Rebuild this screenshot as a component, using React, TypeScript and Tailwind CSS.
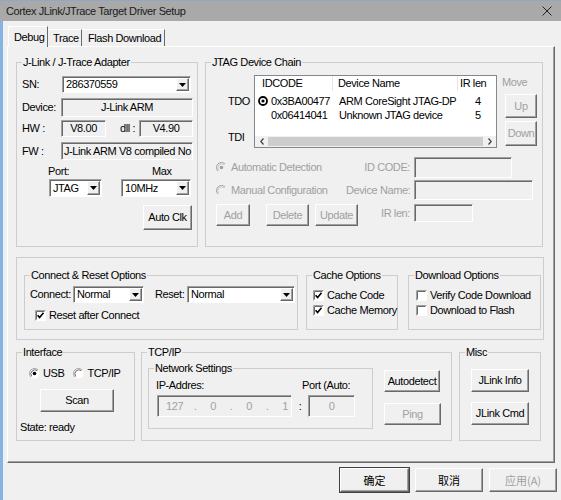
import React from "react";

// raised / sunken 3D edges used by the classic dialog controls
const raised =
  "bg-[#f0f0f0] border border-t-white border-l-white border-r-[#696969] border-b-[#696969] shadow-[inset_-1px_-1px_0_#a0a0a0]";
const sunken =
  "border border-t-[#a0a0a0] border-l-[#a0a0a0] border-r-white border-b-white shadow-[inset_1px_1px_0_#696969]";

const DownArrow = () => (
  <svg width="7" height="4" viewBox="0 0 7 4">
    <path d="M0 0h7L3.5 4z" fill="#000" />
  </svg>
);

function Btn({ className = "", dim, children }: { className?: string; dim?: boolean; children: React.ReactNode }) {
  return (
    <div className={`flex items-center justify-center shrink-0 ${raised} ${dim ? "text-[#a0a0a0]" : ""} ${className}`}>
      {children}
    </div>
  );
}

function Field({ className = "", children }: { className?: string; children?: React.ReactNode }) {
  return <div className={`flex items-center shrink-0 bg-[#f0f0f0] ${sunken} ${className}`}>{children}</div>;
}

function Combo({ className = "", value }: { className?: string; value: string }) {
  return (
    <div className={`flex shrink-0 bg-white ${sunken} ${className}`}>
      <span className="flex-1 self-center pl-[3px] leading-none truncate">{value}</span>
      <span className={`w-[13px] m-[1px] flex items-center justify-center ${raised}`}>
        <DownArrow />
      </span>
    </div>
  );
}

function Check({ on }: { on?: boolean }) {
  return (
    <svg width="11" height="11" viewBox="0 0 11 11" className="shrink-0">
      <rect width="11" height="11" fill="#fff" />
      <path d="M0.5 10.5V0.5H10.5" stroke="#a0a0a0" fill="none" />
      <path d="M1.5 9.5V1.5H9.5" stroke="#696969" fill="none" />
      {on && <path d="M2.6 5.2l2 2.4 3.9-4.8" stroke="#000" strokeWidth="1.6" fill="none" />}
    </svg>
  );
}

function Radio({ on, dim }: { on?: boolean; dim?: boolean }) {
  return (
    <svg width="11" height="11" viewBox="0 0 11 11" className="shrink-0">
      <circle cx="5.5" cy="5.5" r="5" fill={dim ? "#f0f0f0" : "#fff"} />
      <path d="M9.04 1.96A5 5 0 0 0 1.96 9.04" stroke="#a0a0a0" fill="none" />
      <path d="M8.3 2.7A4 4 0 0 0 2.7 8.3" stroke={dim ? "#c8c8c8" : "#696969"} fill="none" />
      {on && <circle cx="5.5" cy="5.5" r="1.8" fill={dim ? "#a0a0a0" : "#000"} />}
    </svg>
  );
}

function ListRadio() {
  return (
    <svg width="10" height="10" viewBox="0 0 10 10" className="shrink-0">
      <circle cx="5" cy="5" r="4" fill="#fff" stroke="#000" strokeWidth="1.8" />
      <circle cx="5" cy="5" r="1.6" fill="#000" />
    </svg>
  );
}

function Group({ className = "", title, children }: { className?: string; title: string; children?: React.ReactNode }) {
  return (
    <fieldset className={`shrink-0 border border-[#cdcdcd] ${className}`}>
      <legend className="ml-[5px] px-[1px] leading-[13px]">{title}</legend>
      {children}
    </fieldset>
  );
}

function Adapter() {
  return (
    <Group className="w-[182px] h-[191px]" title="J-Link / J-Trace Adapter">
      <div className="mt-[7px] h-[17px] flex items-center">
        <span className="w-[45px] pl-[5px]">SN:</span>
        <Combo className="w-[129px] h-[17px]" value="286370559" />
      </div>
      <div className="mt-[5px] h-[19px] flex items-center">
        <span className="w-[44px] pl-[5px]">Device:</span>
        <Field className="w-[132px] h-[19px] justify-center">J-Link ARM</Field>
      </div>
      <div className="mt-[3px] h-[17px] flex items-center">
        <span className="w-[44px] pl-[5px]">HW :</span>
        <Field className="w-[45px] h-[17px] justify-center">V8.00</Field>
        <span className="ml-[14px] w-[19px]">dll :</span>
        <Field className="w-[54px] h-[17px] justify-center">V4.90</Field>
      </div>
      <div className="mt-[5px] h-[18px] flex items-center">
        <span className="w-[44px] pl-[5px]">FW :</span>
        <Field className="w-[132px] h-[18px] pl-[2px] overflow-hidden">J-Link ARM V8 compiled No</Field>
      </div>
      <div className="mt-[5px] h-[12px] flex items-center leading-none">
        <span className="ml-[31px] w-[104px]">Port:</span>
        <span>Max</span>
      </div>
      <div className="mt-[2px] h-[18px] flex">
        <Combo className="ml-[32px] w-[53px] h-[18px]" value="JTAG" />
        <Combo className="ml-[19px] w-[70px] h-[18px]" value="10MHz" />
      </div>
      <Btn className="mt-[8px] ml-[126px] w-[49px] h-[25px]">Auto Clk</Btn>
    </Group>
  );
}

function DeviceList() {
  return (
    <div className="w-[243px] h-[73px] shrink-0 border border-[#828790] bg-white flex flex-col">
      <div className="h-[15px] flex leading-[15px]">
        <span className="w-[78px] pl-[7px] border-r border-[#e5e5e5]">IDCODE</span>
        <span className="w-[125px] pl-[5px] border-r border-[#e5e5e5]">Device Name</span>
        <span className="flex-1 pl-[2px]">IR len</span>
      </div>
      <div className="flex-1 pt-[3px]">
        <div className="h-[14px] flex items-center">
          <span className="w-[78px] pl-[3px] flex items-center gap-[3px]">
            <ListRadio />
            0x3BA00477
          </span>
          <span className="w-[125px] pl-[6px]">ARM CoreSight JTAG-DP</span>
          <span className="pl-[17px]">4</span>
        </div>
        <div className="h-[14px] flex items-center">
          <span className="w-[78px] pl-[16px]">0x06414041</span>
          <span className="w-[125px] pl-[6px]">Unknown JTAG device</span>
          <span className="pl-[17px]">5</span>
        </div>
      </div>
      <div className="h-[11px] flex bg-[#f0f0f0]">
        <span className="w-[13px] flex items-center justify-center">
          <svg width="4" height="7" viewBox="0 0 4 7">
            <path d="M3.5 0.5L0.8 3.5l2.7 3" stroke="#404040" strokeWidth="1.2" fill="none" />
          </svg>
        </span>
        <span className="flex-1 my-[1px] bg-[#cdcdcd]" />
        <span className="w-[13px] flex items-center justify-center">
          <svg width="4" height="7" viewBox="0 0 4 7">
            <path d="M0.5 0.5l2.7 3-2.7 3" stroke="#404040" strokeWidth="1.2" fill="none" />
          </svg>
        </span>
      </div>
    </div>
  );
}

function JtagChain() {
  return (
    <Group className="ml-[7px] w-[338px] h-[191px]" title="JTAG Device Chain">
      <div className="mt-[6px] flex">
        <div className="w-[48px] pl-[22px] flex flex-col leading-[14px]">
          <span className="mt-[19px] h-[14px]">TDO</span>
          <span className="mt-[22px] h-[14px]">TDI</span>
        </div>
        <DeviceList />
        <div className="ml-[5px] flex flex-col">
          <span className="h-[14px] leading-[14px] text-[#a0a0a0]">Move</span>
          <Btn dim className="mt-[5px] ml-[3px] w-[32px] h-[24px]">Up</Btn>
          <Btn dim className="mt-[3px] ml-[3px] w-[32px] h-[25px]">Down</Btn>
        </div>
      </div>
      <div className="mt-[9px] h-[21px] flex items-center text-[#a0a0a0]">
        <div className="w-[140px] pl-[10px] flex items-center gap-[4px]">
          <Radio on dim />
          Automatic Detection
        </div>
        <span className="w-[64px] text-right">ID CODE:</span>
        <Field className="ml-[4px] w-[98px] h-[21px]" />
      </div>
      <div className="mt-[2px] h-[20px] flex items-center text-[#a0a0a0]">
        <div className="w-[140px] pl-[10px] flex items-center gap-[4px]">
          <Radio dim />
          Manual Configuration
        </div>
        <span className="w-[64px] text-right">Device Name:</span>
        <Field className="ml-[4px] w-[119px] h-[20px]" />
      </div>
      <div className="mt-[4px] h-[22px] flex items-start text-[#a0a0a0]">
        <Btn dim className="ml-[10px] w-[34px] h-[22px]">Add</Btn>
        <Btn dim className="ml-[16px] w-[43px] h-[22px]">Delete</Btn>
        <Btn dim className="ml-[6px] w-[43px] h-[22px]">Update</Btn>
        <span className="w-[52px] h-[18px] leading-[18px] text-right">IR len:</span>
        <Field className="ml-[4px] w-[59px] h-[18px]" />
      </div>
    </Group>
  );
}

function ConnectOptions() {
  return (
    <div className="mt-[10px] w-[528px] h-[83px] border border-[#cdcdcd] flex items-start pl-[7px] pt-[11px]">
      <Group className="w-[274px] h-[61px]" title="Connect & Reset Options">
        <div className="mt-[4px] h-[17px] flex items-center">
          <span className="w-[48px] pl-[5px]">Connect:</span>
          <Combo className="w-[71px] h-[17px]" value="Normal" />
          <span className="ml-[11px] w-[32px]">Reset:</span>
          <Combo className="w-[108px] h-[17px]" value="Normal" />
        </div>
        <div className="mt-[5px] h-[14px] pl-[10px] flex items-center gap-[3px]">
          <Check on />
          Reset after Connect
        </div>
      </Group>
      <Group className="ml-[8px] w-[92px] h-[61px]" title="Cache Options">
        <div className="mt-[6px] h-[14px] pl-[6px] flex items-center gap-[3px]">
          <Check on />
          Cache Code
        </div>
        <div className="mt-[1px] h-[14px] pl-[6px] flex items-center gap-[3px]">
          <Check on />
          Cache Memory
        </div>
      </Group>
      <Group className="ml-[10px] w-[133px] h-[61px]" title="Download Options">
        <div className="mt-[6px] h-[14px] pl-[7px] flex items-center gap-[3px] overflow-hidden">
          <Check />
          Verify Code Download
        </div>
        <div className="mt-[1px] h-[14px] pl-[7px] flex items-center gap-[3px]">
          <Check />
          Download to Flash
        </div>
      </Group>
    </div>
  );
}

function BottomGroups() {
  return (
    <div className="mt-[6px] flex items-start">
      <Group className="w-[119px] h-[95px]" title="Interface">
        <div className="mt-[8px] h-[13px] pl-[12px] flex items-center">
          <Radio on />
          <span className="ml-[3px]">USB</span>
          <span className="ml-[9px]">
            <Radio />
          </span>
          <span className="ml-[3px]">TCP/IP</span>
        </div>
        <Btn className="mt-[9px] ml-[23px] w-[74px] h-[23px]">Scan</Btn>
        <div className="mt-[8px] h-[14px] leading-[14px] pl-[3px]">State: ready</div>
      </Group>
      <Group className="ml-[6px] w-[311px] h-[95px]" title="TCP/IP">
        <div className="flex items-start">
          <Group className="ml-[6px] mt-[3px] w-[225px] h-[67px]" title="Network Settings">
            <div className="mt-[4px] h-[12px] flex leading-[12px]">
              <span className="w-[153px] pl-[7px]">IP-Addres:</span>
              <span>Port (Auto:</span>
            </div>
            <div className="mt-[4px] h-[22px] flex items-center">
              <Field className="ml-[8px] w-[135px] h-[22px] pl-[8px] text-[#a0a0a0]">
                <span className="w-[16px] text-center">127</span>
                <span className="w-[26px] text-center">.</span>
                <span className="w-[10px] text-center">0</span>
                <span className="w-[26px] text-center">.</span>
                <span className="w-[10px] text-center">0</span>
                <span className="w-[26px] text-center">.</span>
                <span className="w-[10px] text-center">1</span>
              </Field>
              <span className="w-[16px] text-center">:</span>
              <Field className="w-[47px] h-[22px] justify-center text-[#a0a0a0]">0</Field>
            </div>
          </Group>
          <div className="ml-[11px] flex flex-col">
            <Btn className="mt-[11px] w-[56px] h-[22px]">Autodetect</Btn>
            <Btn dim className="mt-[11px] w-[57px] h-[22px]">Ping</Btn>
          </div>
        </div>
      </Group>
      <Group className="ml-[7px] w-[82px] h-[95px]" title="Misc">
        <Btn className="mt-[10px] ml-[11px] w-[58px] h-[23px]">JLink Info</Btn>
        <Btn className="mt-[10px] ml-[11px] w-[58px] h-[23px]">JLink Cmd</Btn>
      </Group>
    </div>
  );
}

export default function App() {
  return (
    <div className="w-[561px] h-[500px] bg-[#f0f0f0] flex flex-col overflow-hidden whitespace-nowrap font-['Liberation_Sans','Noto_Sans_CJK_SC',sans-serif] text-[11px] tracking-[-0.4px] text-black">
      <div className="h-[21px] shrink-0 bg-[#a9a9a9] border-t border-[#8ea9c6] flex items-center pl-[6px] pr-[9px]">
        <span className="flex-1 text-[#1b1b1b]">Cortex JLink/JTrace Target Driver Setup</span>
        <svg width="10" height="10" viewBox="0 0 10 10">
          <path d="M0.5 0.5l9 9M9.5 0.5l-9 9" stroke="#222" strokeWidth="1" />
        </svg>
      </div>
      <div className="flex-1 border-l-[3px] border-[#86b3e2] pl-[4px] pt-[5px]">
        <div className="flex items-end h-[20px] ml-[1px]">
          <div className="relative z-10 -mb-px h-[21px] w-[40px] pl-[5px] flex items-center bg-[#f0f0f0] border-t border-l border-r border-t-white border-l-white border-r-[#696969]">
            Debug
          </div>
          <div className="h-[17px] w-[34px] pl-[5px] flex items-center border-t border-r border-t-white border-r-[#696969]">
            Trace
          </div>
          <div className="h-[17px] w-[83px] pl-[6px] flex items-center border-t border-r border-t-white border-r-[#696969]">
            Flash Download
          </div>
        </div>
        <div className="w-[548px] h-[417px] pt-[9px] pl-[8px] border border-t-white border-l-white border-r-[#696969] border-b-[#696969] shadow-[inset_-1px_-1px_0_#a0a0a0]">
          <div className="flex items-start">
            <Adapter />
            <JtagChain />
          </div>
          <ConnectOptions />
          <BottomGroups />
        </div>
        <div className="mt-[5px] ml-[333px] flex gap-[6px] tracking-normal font-['Noto_Sans_CJK_SC','Liberation_Sans',sans-serif]">
          <Btn className="w-[69px] h-[24px] outline outline-1 outline-[#404040]">确定</Btn>
          <Btn className="w-[68px] h-[24px]">取消</Btn>
          <Btn dim className="w-[68px] h-[24px]">应用(A)</Btn>
        </div>
      </div>
    </div>
  );
}
